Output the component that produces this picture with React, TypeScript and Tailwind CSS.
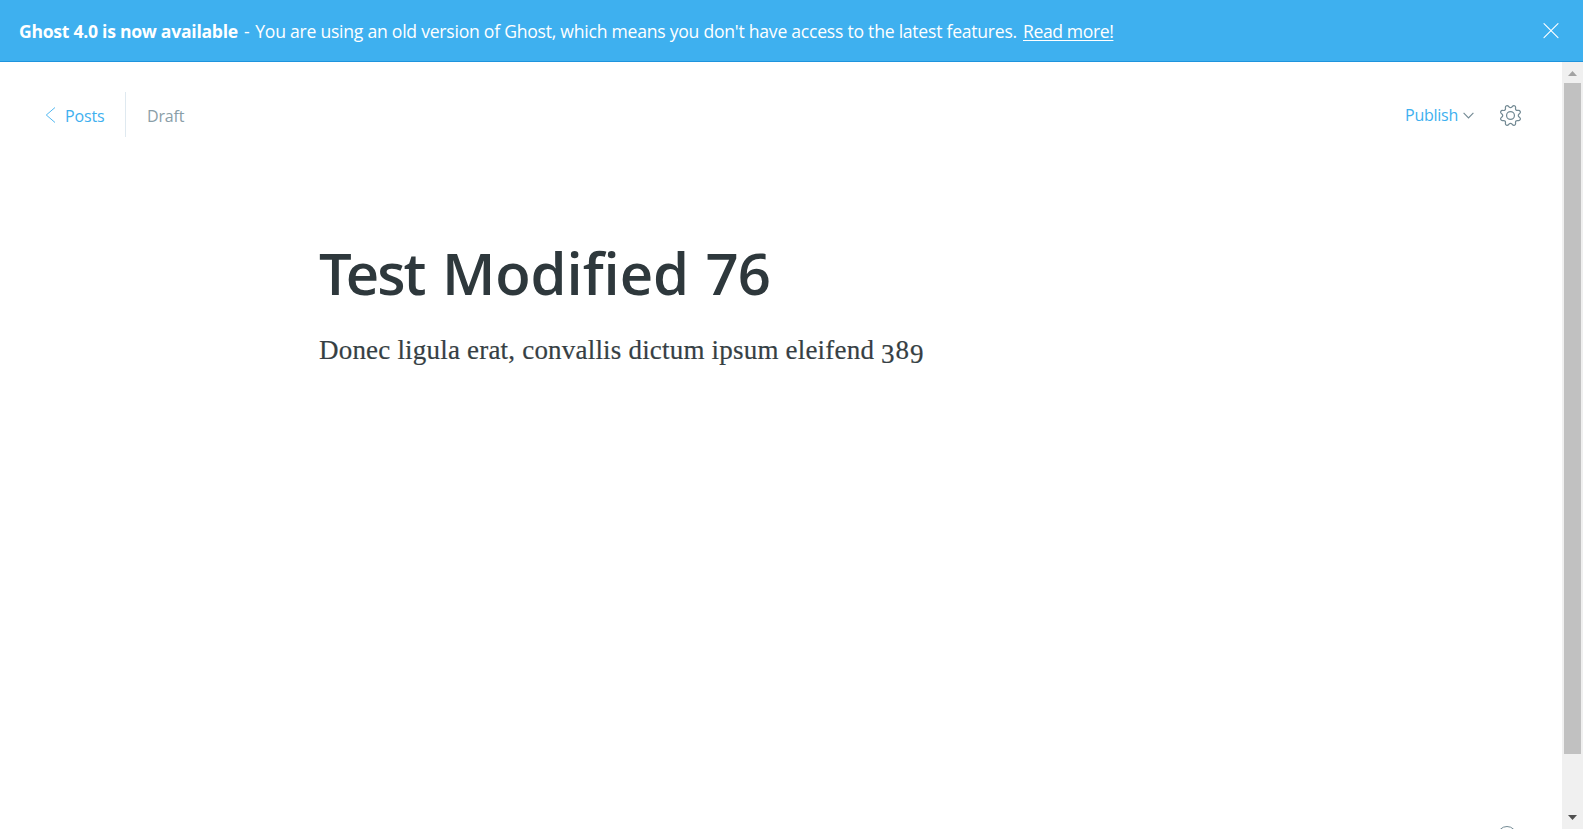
function CloseIcon() {
  return (
    <svg className="block h-4 w-4" viewBox="0 0 16 16" fill="none" stroke="#fff" strokeWidth="1.1" strokeLinecap="round">
      <path d="M1 0.6l14 14M15 0.6L1 14.6" />
    </svg>
  );
}

function GearIcon() {
  return (
    <svg className="block h-[21px] w-[21px]" viewBox="0 0 24 24" fill="none" stroke="#738a94" strokeWidth="1.4" strokeLinecap="round" strokeLinejoin="round">
      <path d="M10.546 2.438a1.957 1.957 0 0 0 2.908 0L14.4 1.4a1.959 1.959 0 0 1 3.41 1.413l-.071 1.4a1.958 1.958 0 0 0 2.051 2.054l1.4-.071a1.959 1.959 0 0 1 1.41 3.41l-1.042.94a1.96 1.96 0 0 0 0 2.909l1.042.94a1.959 1.959 0 0 1-1.413 3.41l-1.4-.071a1.958 1.958 0 0 0-2.056 2.056l.071 1.4A1.959 1.959 0 0 1 14.4 22.6l-.941-1.041a1.959 1.959 0 0 0-2.908 0L9.606 22.6A1.959 1.959 0 0 1 6.2 21.192l.072-1.4a1.958 1.958 0 0 0-2.056-2.056l-1.4.071A1.958 1.958 0 0 1 1.4 14.4l1.041-.94a1.96 1.96 0 0 0 0-2.909L1.4 9.606A1.958 1.958 0 0 1 2.809 6.2l1.4.071a1.958 1.958 0 0 0 2.058-2.06L6.2 2.81A1.959 1.959 0 0 1 9.606 1.4z" />
      <circle cx="12" cy="12" r="4.5" />
    </svg>
  );
}

function Banner() {
  return (
    <div className="flex h-[62px] shrink-0 items-center justify-between border-b border-[#1f94dd] bg-[#3eb0ef] pr-6 pl-[19px] text-white">
      <p className="flex text-[17.6px] leading-6 whitespace-pre">
        <strong className="w-[225px] font-bold tracking-[-0.28px]">Ghost 4.0 is now available</strong>
        <span className="w-[779px] tracking-[-0.25px]">
          <span className="tracking-[0.5px]">- </span>
          You are using an old version of Ghost, which means you don't have access to the latest features.
        </span>
        <a className="tracking-[-0.4px] underline underline-offset-2">Read more!</a>
      </p>
      <CloseIcon />
    </div>
  );
}

function Toolbar() {
  return (
    <header className="flex h-[105px] items-center justify-between pr-[41px] pl-[45px]">
      <div className="flex items-center text-[16px] leading-6">
        <a className="flex items-center text-[#3eb0ef]">
          <svg className="mr-[9px] block h-4 w-[11px]" viewBox="0 0 11 16" fill="none" stroke="#3eb0ef" strokeWidth="0.9">
            <path d="M10 0.5L1.3 8L10 15.5" />
          </svg>
          <span className="w-[60px] pt-[2px] tracking-[-0.15px]">Posts</span>
        </a>
        <div className="h-[45px] w-px bg-[#dfe9f0]" />
        <span className="pt-[2px] pl-[21px] tracking-[-0.15px] text-[#8a9ea7]">Draft</span>
      </div>
      <div className="flex items-center pt-px">
        <a className="flex items-center text-[16px] leading-6 text-[#3eb0ef]">
          <span className="w-[58px] tracking-[-0.25px]">Publish</span>
          <svg className="mt-[1px] block h-[7px] w-[11px]" viewBox="0 0 11 7" fill="none" stroke="#738a94" strokeWidth="1.1">
            <path d="M0.6 0.8L5.5 6L10.4 0.8" />
          </svg>
        </a>
        <div className="ml-[26px]">
          <GearIcon />
        </div>
      </div>
    </header>
  );
}

function Scrollbar() {
  return (
    <div className="flex w-[21px] flex-col items-center bg-[#f0f0f0]">
      <div className="flex h-[21px] items-center pt-[2px]">
        <svg className="block h-[5px] w-[9px]" viewBox="0 0 9 5" fill="#a3a3a3">
          <path d="M0 5L4.5 0L9 5z" />
        </svg>
      </div>
      <div className="h-[671px] w-[17px] bg-[#c1c1c1]" />
      <div className="mt-auto flex h-[14px] items-start">
        <svg className="block h-[5px] w-[9px]" viewBox="0 0 9 5" fill="#505050">
          <path d="M0 0H9L4.5 5z" />
        </svg>
      </div>
    </div>
  );
}

export default function App() {
  return (
    <div className="flex h-[829px] w-[1583px] flex-col overflow-hidden bg-white font-['Open_Sans','Noto_Sans',sans-serif]">
      <Banner />
      <div className="flex min-h-0 flex-1">
        <main className="flex min-w-0 flex-1 flex-col overflow-hidden">
          <Toolbar />
          <article className="flex-1 pt-[66px] pl-[319px] whitespace-nowrap">
            <h1 className="text-[58px] leading-[80px] font-semibold text-[#2e383c]">
              <span className="tracking-[-6px]">T</span>
              <span className="tracking-[-2px]">est</span>
              <span className="tracking-[2.5px]"> </span>
              <span className="tracking-[-0.1px]">Modified</span>
              <span className="tracking-[1.5px]"> </span>
              <span className="tracking-[-1px]">76</span>
            </h1>
            <p className="mt-[16px] font-['Liberation_Serif',serif] text-[27px] leading-[42px] tracking-[0.2px] text-[#363f44] [-webkit-text-stroke:0.2px_#363f44]">
              Donec ligula erat, convallis dictum ipsum eleifend{" "}
              <span className="relative top-[4px] tracking-[1px]">3</span><span className="tracking-[1px]">8</span><span className="relative top-[4px]">9</span>
            </p>
          </article>
          <div className="flex h-[3px] shrink-0 justify-end overflow-hidden pr-[45px]">
            <svg className="block h-5 w-5 shrink-0" viewBox="0 0 20 20" fill="none" stroke="#738a94" strokeWidth="1">
              <circle cx="10" cy="10" r="9.5" />
            </svg>
          </div>
        </main>
        <Scrollbar />
      </div>
    </div>
  );
}
